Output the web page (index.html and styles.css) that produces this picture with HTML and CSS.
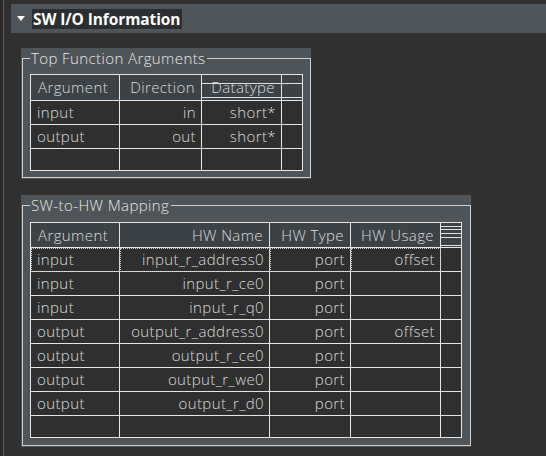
FILE: index.html
```html
<!DOCTYPE html>
<html lang="en">
<head>
<meta charset="utf-8">
<title>SW I/O Information</title>
<link rel="stylesheet" href="styles.css">
</head>
<body>
<div class="view">
  <div class="section-head">
    <span class="caret"></span>
    <span class="title">SW I/O Information</span>
  </div>
  <div class="content">
    <div class="panel panel-args">
      <fieldset class="group group-args">
        <legend>Top Function Arguments</legend>
        <table class="grid grid-args">
          <thead>
            <tr>
              <th class="c-arg">Argument</th>
              <th class="c-dir">Direction</th>
              <th class="c-type sorted">Datatype</th>
              <th class="c-fill sorted"></th>
            </tr>
          </thead>
          <tbody>
            <tr><td class="left">input</td><td>in</td><td>short*</td><td></td></tr>
            <tr><td class="left">output</td><td>out</td><td>short*</td><td></td></tr>
            <tr class="empty"><td></td><td></td><td></td><td></td></tr>
          </tbody>
        </table>
      </fieldset>
    </div>
    <div class="panel panel-map">
      <fieldset class="group group-map">
        <legend>SW-to-HW Mapping</legend>
        <table class="grid grid-map">
          <thead>
            <tr>
              <th class="c-arg">Argument</th>
              <th class="c-name">HW Name</th>
              <th class="c-hwtype">HW Type</th>
              <th class="c-usage">HW Usage</th>
              <th class="c-fill corner"></th>
            </tr>
          </thead>
          <tbody>
            <tr class="focus"><td class="left">input</td><td>input_r_address0</td><td>port</td><td>offset</td><td class="nofocus"></td></tr>
            <tr><td class="left">input</td><td>input_r_ce0</td><td>port</td><td></td><td></td></tr>
            <tr><td class="left">input</td><td>input_r_q0</td><td>port</td><td></td><td></td></tr>
            <tr><td class="left">output</td><td>output_r_address0</td><td>port</td><td>offset</td><td></td></tr>
            <tr><td class="left">output</td><td>output_r_ce0</td><td>port</td><td></td><td></td></tr>
            <tr><td class="left">output</td><td>output_r_we0</td><td>port</td><td></td><td></td></tr>
            <tr><td class="left">output</td><td>output_r_d0</td><td>port</td><td></td><td></td></tr>
            <tr class="empty"><td></td><td></td><td></td><td></td><td></td></tr>
          </tbody>
        </table>
      </fieldset>
    </div>
  </div>
</div>
</body>
</html>
```
FILE: styles.css
```css
html {
  background: #2a2a2a;
}
body {
  margin: 0;
  font-family: "Open Sans", "DejaVu Sans", sans-serif;
  color: #d4d4d4;
}
.view {
  margin-left: 3px;
  border-left: 1px solid #5e5e5e;
  background: #303030;
  min-height: 456px;
  padding-top: 4px;
  box-sizing: border-box;
  overflow: hidden;
}
.section-head {
  margin-left: 7px;
  height: 29px;
  background: #505559;
  display: flex;
  align-items: center;
}
.caret {
  width: 0;
  height: 0;
  border-left: 4px solid transparent;
  border-right: 4px solid transparent;
  border-top: 5px solid #ffffff;
  margin-left: 6px;
}
.title {
  margin-left: 7px;
  padding: 0 2px 0 1px;
  background: #2c2e2f;
  color: #ffffff;
  font-weight: 700;
  font-size: 15.5px;
  line-height: 20px;
  letter-spacing: -0.1px;
}
.content {
  padding: 15px 0 0 17px;
}
.panel {
  background: #4f5458;
  padding: 2px 0 1px 0;
}
.panel-args {
  width: 290px;
}
.panel-map {
  width: 450px;
  margin-top: 16px;
}
.group {
  margin: 0 0 0 1px;
  border: 1px solid #cfcfcf;
  min-width: 0;
}
.group-args {
  padding: 7px 7px 6px 7px;
}
.group-map {
  padding: 8px 8px 7px 7px;
}
legend {
  padding: 0 2px 0 1px;
  font-size: 15px;
  font-weight: 300;
  line-height: 17px;
  letter-spacing: 0.4px;
  color: #e6e6e6;
}
.grid {
  border-collapse: separate;
  border-spacing: 0;
  table-layout: fixed;
  box-sizing: border-box;
  border-top: 1px solid #e6e6e6;
  border-left: 1px solid #e6e6e6;
  font-size: 15px;
  font-weight: 300;
  letter-spacing: 0.4px;
}
.grid-args {
  width: 273px;
}
.grid-map {
  width: 432px;
}
.grid th,
.grid td {
  box-sizing: border-box;
  border-right: 1px solid #e6e6e6;
  border-bottom: 1px solid #e6e6e6;
  padding: 0 5px 0 7px;
  white-space: nowrap;
  overflow: hidden;
  vertical-align: middle;
}
.grid th {
  background: #3d4246;
  color: #dadcde;
  font-weight: 300;
  text-align: right;
  padding-right: 6px;
}
.grid-args th {
  line-height: 25px;
}
.grid-map th {
  line-height: 24px;
}
.grid th.c-arg {
  text-align: left;
}
.grid td {
  background: #2f2f2f;
  color: #dcdcdc;
  line-height: 23px;
  text-align: right;
}
.grid td.left {
  text-align: left;
  padding-left: 6px;
}
.grid tr.empty td {
  line-height: 21px;
  height: 22px;
}
.c-arg { width: 89px; }
.c-dir { width: 82px; }
.c-type { width: 80px; }
.c-fill { width: 21px; }
.c-name { width: 150px; }
.c-hwtype { width: 81px; }
.c-usage { width: 90px; }
.grid th.sorted {
  background-color: #3d4246;
  background-image: linear-gradient(#e0e0e0, #e0e0e0), linear-gradient(#e0e0e0, #e0e0e0);
  background-size: 100% 1px, 100% 1px;
  background-position: 0 8px, 0 22px;
  background-repeat: no-repeat;
}
.grid th.corner {
  background-color: #3d4246;
  background-image:
    linear-gradient(#e0e0e0, #e0e0e0),
    linear-gradient(#e0e0e0, #e0e0e0),
    linear-gradient(#e0e0e0, #e0e0e0),
    linear-gradient(#e0e0e0, #e0e0e0),
    linear-gradient(#e0e0e0, #e0e0e0);
  background-size: 100% 1px;
  background-position: 0 3px, 0 6px, 0 10px, 0 14px, 0 22px;
  background-repeat: no-repeat;
  padding: 0;
}
.grid tr.focus td {
  outline: 1px dotted #c4c4c4;
  outline-offset: -1px;
}
.grid tr.focus td.nofocus {
  outline: none;
}
```
